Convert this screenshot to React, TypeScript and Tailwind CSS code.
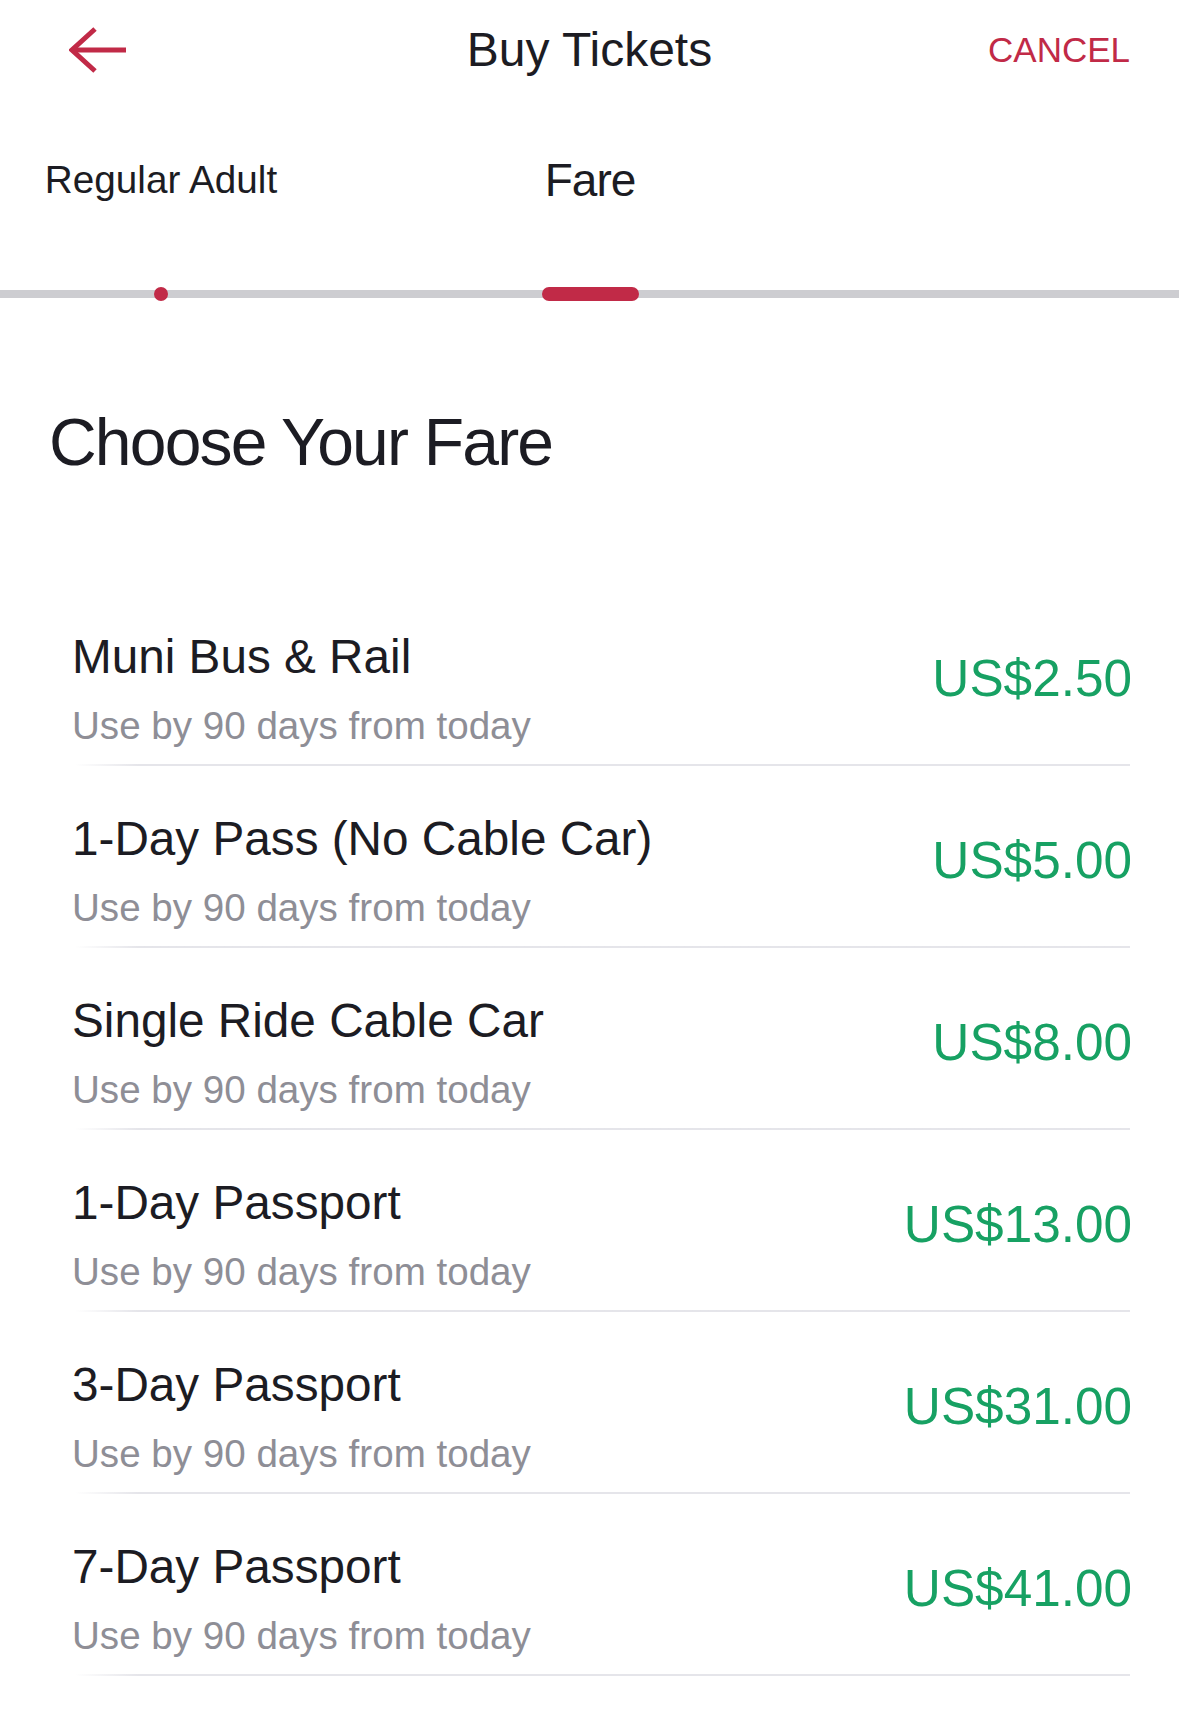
import React from "react";

const fares = [
  { name: "Muni Bus & Rail", price: "US$2.50" },
  { name: "1-Day Pass (No Cable Car)", price: "US$5.00" },
  { name: "Single Ride Cable Car", price: "US$8.00" },
  { name: "1-Day Passport", price: "US$13.00" },
  { name: "3-Day Passport", price: "US$31.00" },
  { name: "7-Day Passport", price: "US$41.00" },
];

function BackArrow() {
  return (
    <svg width="60" height="50" viewBox="0 0 60 50" fill="none" className="block">
      <path d="M26 4 L3 25 L26 46" stroke="#c12a47" strokeWidth="5" strokeLinejoin="miter" />
      <path d="M4 25 H57" stroke="#c12a47" strokeWidth="5" />
    </svg>
  );
}

export default function App() {
  return (
    <div className="w-[1179px] min-h-[1722px] bg-white text-[#1c1c23] font-['Liberation_Sans',Arial,sans-serif]">
      {/* Header */}
      <div className="grid grid-cols-[1fr_auto_1fr] items-center h-[100px]">
        <div className="pl-[69px]">
          <BackArrow />
        </div>
        <div className="text-[48px] leading-[56px]">Buy Tickets</div>
        <div className="justify-self-end pr-[49px] text-[35px] leading-[44px] text-[#c12a47]">CANCEL</div>
      </div>

      {/* Tabs */}
      <div className="relative">
        <div className="absolute left-0 right-0 top-[190px] h-[8px] bg-[#cdcdd1]" />
        <div className="relative flex">
          <div className="w-[322px] flex flex-col items-center">
            <div className="h-[160px] flex items-center text-[38.7px] leading-[46px]">Regular Adult</div>
            <div className="mt-[27px] w-[14px] h-[14px] rounded-full bg-[#c12a47]" />
          </div>
          <div className="w-[536px] flex flex-col items-center">
            <div className="h-[160px] flex items-center text-[46px] leading-[54px] tracking-[-1px]">Fare</div>
            <div className="mt-[27px] w-[97px] h-[14px] rounded-full bg-[#c12a47]" />
          </div>
        </div>
      </div>

      {/* Heading */}
      <h1 className="mt-[103px] pl-[49px] text-[66px] leading-[76px] tracking-[-1.8px] font-normal">
        Choose Your Fare
      </h1>

      {/* List */}
      <div className="mt-[104px]">
        {fares.map((f) => (
          <div key={f.name}>
            <div className="flex justify-between items-start h-[180px] pl-[72px] pr-[47px]">
              <div className="pt-[45px]">
                <div className="text-[47.7px] leading-[56px]">{f.name}</div>
                <div className="mt-[19px] text-[38.6px] leading-[44px] text-[#8e8e96]">Use by 90 days from today</div>
              </div>
              <div className="pt-[65px] text-[51.3px] leading-[60px] text-[#17a163]">{f.price}</div>
            </div>
            <div className="ml-[75px] mr-[49px] h-[2px] bg-linear-to-r from-white to-[#e5e5ea] to-[6%]" />
          </div>
        ))}
      </div>
    </div>
  );
}
